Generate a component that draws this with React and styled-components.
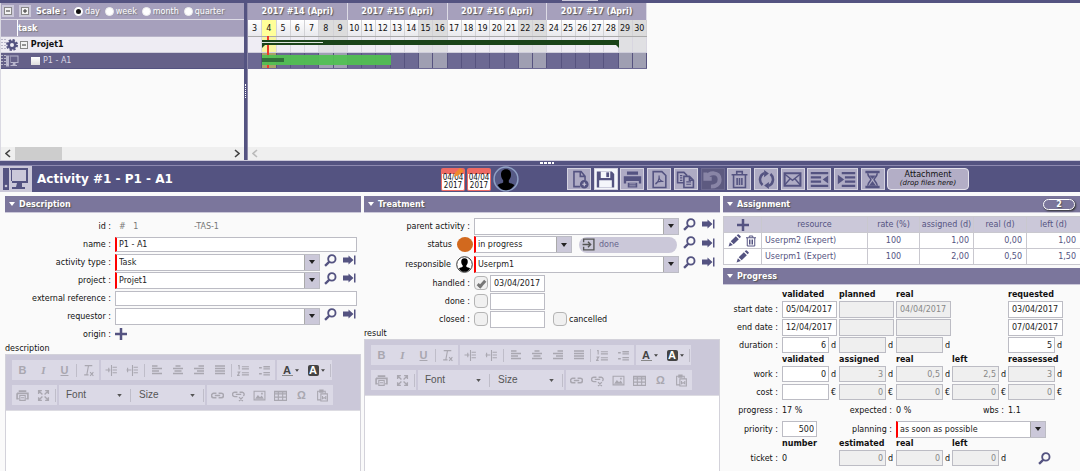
import React from 'react';
import styled, { createGlobalStyle, css } from 'styled-components';

const GlobalStyle = createGlobalStyle`
  *, *::before, *::after { box-sizing: border-box; }
  body {
    margin: 0;
    background: #fafafa;
    color: #111;
    font-family: "DejaVu Sans", Verdana, sans-serif;
    font-size: 8px;
    line-height: 11px;
  }
  button, input, select, textarea {
    margin: 0;
    padding: 0;
    border: 0;
    border-radius: 0;
    background: none;
    color: inherit;
    font: inherit;
  }
  svg { display: block; flex: none; }
`;

const dark = '#545381';
const mid = '#7b769c';
const soft = '#a6a0bc';
const pale = '#cbc8d9';

const Page = styled.div`
  min-height: 100vh;
  display: flex;
  flex-direction: column;
`;

const TopEdge = styled.div`
  height: 3px;
  padding-left: 52%;
  background: ${dark};
  &::before {
    content: '';
    display: block;
    width: 36px;
    height: 1px;
    background: ${pale};
  }
`;

/* ---------- icons ---------- */

const Svg = ({ w = 12, h = w, box = '0 0 24 24', children, ...rest }) => (
  <svg width={w} height={h} viewBox={box} fill="none" stroke="currentColor" strokeWidth="2" aria-hidden="true" {...rest}>
    {children}
  </svg>
);

const SearchIcon = () => (
  <Svg w={13} strokeWidth="3.4">
    <circle cx="14.5" cy="9" r="6.8" />
    <path d="M10 14 L2 22" strokeWidth="4.2" />
  </Svg>
);

const GotoIcon = () => (
  <Svg w={13} h={10} box="0 0 26 20" stroke="none" fill="currentColor">
    <path d="M0 5h11V1l10 9-10 9v-4H0zM22 1h3v18h-3z" />
  </Svg>
);

const PlusIcon = ({ w = 12 }) => (
  <Svg w={w} strokeWidth="5">
    <path d="M12 0v24M0 12h24" />
  </Svg>
);

const PencilIcon = () => (
  <Svg w={13} stroke="none" fill="currentColor">
    <path d="M1 23l2.500-8 5.500 5.500zM5 13.500L14.500 4l5.500 5.500L10.500 19zM16 2.500L18 .800q1-.800 2 0l3.300 3.300q.800 1 0 2L21.500 8z" />
  </Svg>
);

const TrashIcon = ({ w = 12 }) => (
  <Svg w={w}>
    <path d="M2 5.500h20M8.500 5V2h7v3M4.500 6v16h15V6M9 9v10M12 9v10M15 9v10" />
  </Svg>
);

const ScreenIcon = ({ w = 26, h = 24 }) => (
  <Svg w={w} h={h} box="0 0 26 24" stroke="none" fill="currentColor">
    <path d="M0 1h6v22H0z" />
    <circle cx="3" cy="19" r="1.300" fill={pale} />
    <path d="M7 1h18v15h-6v4h3v2H9v-2h4l1-4H9v-2h14V3H7z" fillRule="evenodd" />
    <path d="M8 3h1v11H8z" />
  </Svg>
);

const GearIcon = () => (
  <Svg w={12}>
    <circle cx="12" cy="12" r="6.500" strokeWidth="5" />
    <circle cx="12" cy="12" r="10" strokeWidth="4" strokeDasharray="4.500 3.354" />
  </Svg>
);

const PersonShape = ({ w = 24, ring = '#8fa0c4', bg = '#565a86' }) => (
  <Svg w={w} stroke="none">
    <circle cx="12" cy="12" r="11" fill={bg} stroke={ring} strokeWidth="1.400" />
    <path d="M12 3c3.400 0 4.800 2.400 4.600 5.400-.1 2.300-1 3.700-2 4.800v2c1.500 1 3.700 1 5.200 2.300C18 20.600 15.200 22.400 12 22.400S6 20.600 4.200 17.500c1.500-1.300 3.700-1.300 5.200-2.300v-2c-1-1.100-1.900-2.500-2-4.800C7.200 5.400 8.600 3 12 3z" fill="#000" />
  </Svg>
);

const actionIcons = {
  'New activity': (
    <>
      <path d="M13 21H5V2h9l5 6v5M13 2v6h6" />
      <circle cx="18" cy="18" r="4.500" fill={dark} />
      <path d="M18 15.500v5M15.500 18h5" stroke={pale} strokeWidth="1.500" />
    </>
  ),
  Save: (
    <>
      <path d="M1 2h19l3 3v17H1z" fill={dark} stroke="none" />
      <path d="M6 2h12v8H6zM4 13h16v9H4z" fill="#f4f6fb" stroke="none" />
      <path d="M13 3h3.500v6H13z" fill={dark} stroke="none" />
    </>
  ),
  Print: (
    <>
      <path d="M5 2h14v4H5zM1 8h22v9h-3v-3H4v3H1zM6 16h12v6H6z" fill={dark} stroke="none" />
      <path d="M8 17.500h8M8 20h8" stroke="#b4b1c8" strokeWidth="1" />
    </>
  ),
  'Export to PDF': (
    <>
      <path d="M4 2h11l5 5v15H4z" />
      <path d="M7 18c3-2 5-7 4.500-11M7 18c1-3 5-4 10-3.500M11.500 10c1 3 3 4.500 5.500 4.500" strokeWidth="1.500" />
    </>
  ),
  Copy: (
    <>
      <path d="M9 16H2V3h8l4 4M10 8h7l5 5v9H10zM17 8v5h5" />
      <path d="M5 7h3M5 10h3M5 13h3M13 15h6M13 18h6" strokeWidth="1.500" />
    </>
  ),
  Undo: <path d="M3 3v8h8M4 10C8 2 21 2 21 12c0 6-5 9-11 9" strokeWidth="5" />,
  Delete: <path d="M2 6h20M8.500 5V2h7v3M4.500 7v15h15V7M9 10v9M12 10v9M15 10v9" />,
  Refresh: (
    <>
      <path d="M7 19A9 9 0 0 1 9 4M17 5a9 9 0 0 1-2 15" strokeWidth="3.200" />
      <path d="M9 0l6 4.500L9 9zM15 15v9l-6-4.500z" fill={dark} stroke="none" />
    </>
  ),
  'Send mail': (
    <>
      <path d="M2 4h20v16H2z" strokeWidth="2.600" />
      <path d="M2 5l10 8 10-8M2 19l7-8M22 19l-7-8" strokeWidth="1.800" />
    </>
  ),
  Outdent: (
    <>
      <path d="M1 4h22M1 9.300h13M1 14.600h13M1 20h22" strokeWidth="2.800" />
      <path d="M23 7v10l-7-5z" fill={dark} stroke="none" />
    </>
  ),
  Indent: (
    <>
      <path d="M6 4h17M10 9.300h13M10 14.600h13M6 20h17" strokeWidth="2.800" />
      <path d="M1 6v12l8-6z" fill={dark} stroke="none" />
    </>
  ),
  History: (
    <>
      <path d="M3 2.500h18M3 21.500h18" strokeWidth="3" />
      <path d="M6 4c0 4 4 6 4 8s-4 4-4 8M18 4c0 4-4 6-4 8s4 4 4 8" />
      <path d="M8 7h8l-4 4.500zM12 14l4.500 6h-9z" fill={dark} stroke="none" />
    </>
  ),
};

/* ---------- planning (gantt) pane ---------- */

const Planning = styled.div`
  display: grid;
  grid-template-columns: 244px 4px 1fr;
`;

const Divider = styled.div`
  display: flex;
  align-items: center;
  justify-content: center;
  background: ${dark};
  border-right: 1px solid #8d89a8;
  &::after {
    content: '';
    height: 14px;
    border-left: 1px dotted #fff;
    margin-top: 18px;
  }
`;

const TaskList = styled.div`
  display: flex;
  flex-direction: column;
  border-left: 1px solid #dad9e2;
`;

const ScaleBar = styled.div`
  height: 17px;
  display: flex;
  align-items: center;
  padding-left: 1px;
  background: ${soft};
  border-bottom: 1px solid #dddbe6;
  color: #fff;
`;

const ExpandButton = styled.button`
  width: 12px;
  height: 12px;
  margin-right: 5px;
  display: grid;
  place-items: center;
  background: ${pale};
`;

const SignBox = styled.span`
  width: 8px;
  height: 8px;
  border: 1px solid #888;
  background: #f3f3f3;
  color: #333;
  display: grid;
  place-items: center;
  flex: none;
`;

const ScaleTitle = styled.strong`
  margin-right: 8px;
  text-shadow: 1px 1px 1px #555;
`;

const ScaleOption = styled.label`
  display: flex;
  align-items: center;
  gap: 2px;
  margin-right: 5px;
  text-shadow: 1px 1px 1px #777;
  input {
    appearance: none;
    width: 9px;
    height: 9px;
    border-radius: 50%;
    background: #fff;
    border: 1px solid #eee;
  }
  input:checked {
    background: #111;
    border: 2px solid #fff;
  }
`;

const TaskHead = styled.div`
  height: 17px;
  display: flex;
  align-items: center;
  background: ${soft};
  border-bottom: 1px solid #b9b5c9;
  color: #fff;
  font-weight: bold;
  text-shadow: 1px 1px 1px #777;
  &::before {
    content: '';
    width: 17px;
    height: 16px;
    border-right: 1px solid #fff;
  }
`;

const TaskRow = styled.div`
  height: 16px;
  display: flex;
  align-items: center;
  color: ${(p) => (p.$selected ? '#d9d7e6' : '#111')};
  background: ${(p) => (p.$selected ? '#656189' : '#eeecf3')};
  border-bottom: 1px solid ${(p) => (p.$selected ? dark : '#cfcedb')};
  font-weight: ${(p) => (p.$selected ? 'normal' : 'bold')};
`;

const Grip = styled.span`
  width: 6px;
  height: 12px;
  margin-right: -1px;
  background: repeating-linear-gradient(transparent 0 1px, ${(p) => p.$gap} 1px 3px),
    repeating-linear-gradient(90deg, #b9b7c9 0 2px, transparent 2px 3px);
`;

const RowIcon = styled.span`
  width: 14px;
  color: ${(p) => (p.$light ? '#b7b5cc' : dark)};
`;

const Bullet = styled.span`
  width: 9px;
  height: 8px;
  margin: 0 3px 0 11px;
  background: linear-gradient(#fff, #ddd);
`;

const PaneBody = styled.div`
  height: 78px;
  background: #fafafa;
`;

const ScrollTrack = styled.div`
  height: 13px;
  display: flex;
  align-items: center;
  padding: 0 4px;
  gap: 4px;
  background: #efefef;
  color: ${(p) => (p.$idle ? '#bbb' : '#444')};
`;

const ScrollThumb = styled.div`
  width: 47px;
  height: 13px;
  margin-right: auto;
  background: #cdcdcd;
`;

const Chart = styled.div`
  position: relative;
  width: 399px;
`;

const WeekRow = styled.div`
  height: 17px;
  display: grid;
  grid-template-columns: repeat(4, 1fr);
  background: ${soft};
`;

const Week = styled.div`
  display: grid;
  place-items: center;
  border-right: 1px solid #dddbe6;
  color: #fff;
  font-weight: bold;
  text-shadow: 1px 1px 1px #555;
`;

const DayRow = styled.div`
  height: ${(p) => p.$height}px;
  display: grid;
  grid-template-columns: repeat(28, 1fr);
  background: ${(p) => p.$bg};
  border-bottom: 1px solid ${(p) => p.$line};
`;

const Day = styled.div`
  display: grid;
  place-items: center;
  overflow: hidden;
  border-right: 1px solid ${(p) => p.$line};
  ${(p) => p.$weekend && css`background: ${p.$shade};`}
  ${(p) => p.$today && css`background: ${p.$todayShade};`}
`;

const Overlay = styled.div`
  position: absolute;
  left: 0;
  right: 0;
  top: 34px;
  height: 32px;
`;

const TodayLine = styled.div`
  position: absolute;
  left: 19px;
  top: -1px;
  width: 2px;
  height: 32px;
  background: #ee3a2c;
`;

const SummaryBar = styled.div`
  position: absolute;
  top: 3px;
  height: 5px;
  background: #1a4319;
  &::before, &::after {
    content: '';
    position: absolute;
    top: 5px;
    border-top: 3px solid #1a4319;
  }
  &::before { left: 0; border-right: 3px solid transparent; }
  &::after { right: 0; border-left: 3px solid transparent; }
`;

const SummaryProgress = styled.div`
  position: relative;
  top: 2px;
  height: 1px;
  background: #dfe6df;
`;

const TaskBar = styled.div`
  position: absolute;
  top: 18px;
  height: 10px;
  padding: 3px 0;
  background: rgba(81, 193, 82, .93);
`;

const TaskProgress = styled.div`
  height: 4px;
  background: #32703b;
`;

const HorizontalSplit = styled.div`
  height: 6px;
  display: flex;
  justify-content: center;
  padding-left: 14px;
  background: ${dark};
  border-top: 1px solid ${pale};
  border-bottom: 1px solid #8d89b0;
  &::before {
    content: '';
    width: 14px;
    height: 2px;
    margin-top: 1px;
    background: repeating-linear-gradient(90deg, #fff 0 3px, ${dark} 3px 4px);
  }
`;

/* ---------- activity header ---------- */

const ActivityHeader = styled.header`
  height: 26px;
  display: grid;
  grid-template-columns: 441fr 126fr 513fr;
  align-items: center;
  background: ${dark};
`;

const TitleArea = styled.div`
  display: flex;
  align-items: center;
  gap: 5px;
  color: #fff;
`;

const ActivityIcon = styled.div`
  width: 32px;
  height: 26px;
  display: grid;
  place-items: center;
  background: ${pale};
  color: ${dark};
`;

const Title = styled.h1`
  margin: 0;
  font-size: 12px;
  line-height: 16px;
`;

const Badges = styled.div`
  display: flex;
  align-items: center;
  gap: 2px;
`;

const Calendar = styled.time`
  position: relative;
  width: 24px;
  height: 23px;
  border: 1px solid #ee6a63;
  border-top-width: 6px;
  border-radius: 2px;
  background: #fff;
  color: #111;
  font: 8px/8px "DejaVu Sans Condensed", Verdana, sans-serif;
  text-align: center;
  svg {
    position: absolute;
    right: 0;
    top: -6px;
  }
`;

const Actions = styled.div`
  display: flex;
  align-items: center;
  gap: 2px;
`;

const ActionList = styled.div`
  flex: 0 0 318px;
  display: flex;
  justify-content: space-between;
`;

const ActionButton = styled.button`
  width: 24px;
  height: 22px;
  display: grid;
  place-items: center;
  color: ${dark};
  background: ${(p) => (p.$active ? '#f4f6fb' : '#aeabc4')};
  border: 1px solid #d5d3e1;
  &:disabled {
    color: #8985a6;
    background: #5d5a80;
    border-color: #6d6a90;
  }
`;

const DropZone = styled.button`
  width: 82px;
  height: 22px;
  border: 1px solid #e4e2ec;
  border-radius: 4px;
  background: #b3aec6;
  color: #111;
  line-height: 8px;
  em { display: block; font-size: 7px; }
`;

/* ---------- detail form ---------- */

const Columns = styled.main`
  flex: 1;
  display: grid;
  grid-template-columns: 356fr 356fr 357fr;
  gap: 3px;
  padding: 4px 0 0 5px;
`;

const Column = styled.section`
  min-width: 0;
  display: flex;
  flex-direction: column;
`;

const SectionHead = styled.h2`
  height: 17px;
  flex: none;
  margin: 0;
  padding: 0 5px 0 4px;
  display: flex;
  align-items: center;
  gap: 4px;
  background: ${mid};
  border-bottom: 1px solid ${pale};
  color: #fff;
  font-size: 8px;
  text-shadow: 1px 1px 1px #555;
`;

const CountPill = styled.span`
  width: 32px;
  height: 11px;
  margin-left: auto;
  border: 1px solid #fff;
  border-radius: 6px;
  box-shadow: 1px 1px 2px #333;
  background: ${mid};
  line-height: 10px;
  text-align: center;
`;

const Form = styled.div`
  padding-top: ${(p) => p.$top || 4}px;
`;

const Line = styled.div`
  height: ${(p) => p.$height || 18}px;
  display: flex;
  align-items: center;
`;

const Label = styled.label`
  flex: 0 0 110px;
  display: flex;
  align-items: center;
  justify-content: flex-end;
  gap: 5px;
  padding-right: ${(p) => (p.$tight ? 1 : 4)}px;
`;

const boxed = css`
  min-width: 0;
  border: 1px solid #bcbcc4;
  background: #fff;
  color: #222;
`;

const TextBox = styled.input`
  ${boxed}
  flex: 1;
  height: 15px;
  margin-right: 4px;
  padding: 0 2px;
  border-left: ${(p) => (p.required ? '2px solid #f00' : '1px solid #bcbcc4')};
`;

const SelectShell = styled.span`
  ${boxed}
  position: relative;
  flex: 1;
  height: 17px;
  display: flex;
  border-left: ${(p) => (p.$required ? '2px solid #f00' : '1px solid #bcbcc4')};
  select {
    appearance: none;
    width: 100%;
    padding: 0 18px 0 2px;
  }
`;

const SelectArrow = styled.span`
  position: absolute;
  top: 0;
  right: 0;
  width: 15px;
  height: 15px;
  display: grid;
  place-items: center;
  background: ${pale};
  border-left: 1px solid #aaa;
  pointer-events: none;
`;

const Links = styled.span`
  flex: 0 0 41px;
  display: flex;
  align-items: center;
  gap: 6px;
  padding: 0 0 4px 4px;
`;

const IconButton = styled.button`
  display: block;
  color: ${dark};
`;

const IconLink = styled.a`
  color: ${dark};
`;

const Muted = styled.span`
  width: 75px;
  padding-left: 4px;
  color: #777;
`;

const StatusDot = styled.i`
  width: 16px;
  height: 15px;
  border-radius: 50%;
  background: #d2691e;
`;

const NextStatus = styled.button`
  flex: 1;
  height: 16px;
  margin: 0 2px 0 7px;
  padding-left: 3px;
  display: flex;
  align-items: center;
  gap: 4px;
  border-radius: 8px;
  background: ${pale};
  color: #67648c;
`;

const CheckBox = styled.input`
  appearance: none;
  width: 14px;
  height: 14px;
  display: grid;
  place-items: center;
  border: 1px solid #b4b4b4;
  border-radius: 4px;
  background: #f0f0f0;
  &:checked::after {
    content: '';
    width: 5px;
    height: 9px;
    border: solid #777;
    border-width: 0 3px 3px 0;
    transform: rotate(42deg);
  }
`;

const DateBox = styled.input`
  ${boxed}
  width: 55px;
  height: 17px;
  padding-left: 3px;
  &:disabled {
    background: #efefef;
    color: #888;
  }
`;

const HandledDate = styled(DateBox)`
  margin-left: 2px;
`;

const InlineCheck = styled.label`
  display: flex;
  align-items: center;
  gap: 2px;
  margin-left: 8px;
`;

/* ---------- rich text editor ---------- */

const EditorTitle = styled.label`
  height: 11px;
  flex: none;
`;

const EditorFrame = styled.div`
  flex: 1;
  display: flex;
  flex-direction: column;
  border: 1px solid #d3d2da;
  border-bottom: 0;
  textarea {
    flex: 1;
    min-height: 60px;
    width: 100%;
    resize: none;
    background: #fff;
  }
`;

const Tools = styled.div`
  padding: 5px 6px 5px;
  display: grid;
  gap: 5px;
  background: ${pale};
  border-bottom: 1px solid #dddce2;
`;

const ToolRow = styled.div`
  display: flex;
  gap: 2px;
`;

const ToolGroup = styled.div`
  height: 20px;
  display: flex;
  align-items: center;
  background: #dbd9e6;
  color: #a9a7b0;
`;

const Tool = styled.button`
  width: ${(p) => (p.$wide ? 26 : 21)}px;
  height: 20px;
  display: flex;
  align-items: center;
  justify-content: center;
  gap: 2px;
  color: ${(p) => (p.$wide ? '#444' : 'inherit')};
  font: ${(p) => (p.$italic ? 'italic' : 'normal')} bold 11px/12px
    ${(p) => (p.$italic ? '"Liberation Serif", serif' : '"Liberation Sans", Arial, sans-serif')};
  text-decoration: ${(p) => (p.$underline ? 'underline' : 'none')};
`;

const ToolDivider = styled.i`
  width: 1px;
  height: 13px;
  margin: 0 1px;
  background: #bfbdc9;
`;

const Combo = styled.span`
  position: relative;
  width: 70px;
  color: #555;
  font: 10px/12px "Liberation Sans", Arial, sans-serif;
  select {
    appearance: none;
    width: 100%;
    padding-left: 7px;
  }
  svg {
    position: absolute;
    right: 7px;
    top: 5px;
    pointer-events: none;
  }
`;

const LetterMark = styled.span`
  width: 11px;
  height: 11px;
  color: ${(p) => (p.$filled ? '#fff' : '#444')};
  background: ${(p) => (p.$filled ? '#444' : 'none')};
  border-bottom: ${(p) => (p.$filled ? 0 : '1px solid #888')};
  border-radius: ${(p) => (p.$filled ? 2 : 0)}px;
  line-height: 11px;
`;

/* ---------- assignment + progress ---------- */

const AssignTable = styled.table`
  width: 100%;
  margin: 3px 0;
  table-layout: fixed;
  border-collapse: collapse;
  color: ${dark};
  th, td {
    height: 16px;
    padding: 0 4px;
    border: 1px solid #c9c8cf;
    text-align: right;
    white-space: nowrap;
  }
  th {
    padding: 0;
    background: ${pale};
    font-weight: normal;
    text-align: center;
  }
  td { background: #fff; }
  td:nth-child(1), td:nth-child(3) { text-align: center; }
  td:nth-child(2) { padding-left: 3px; text-align: left; }
  th:nth-child(4), td:nth-child(4) { border-left-color: #999; }
`;

const CellTools = styled.span`
  display: flex;
  justify-content: center;
  gap: 4px;
`;

const ProgressLine = styled.div`
  height: ${(p) => p.$height || 18}px;
  display: grid;
  grid-template-columns: 56px 57px 57px 56px 56px 1fr;
  padding-left: 3px;
  align-items: center;
  > :first-child {
    padding-right: 4px;
    text-align: right;
    white-space: nowrap;
  }
`;

const HeadCell = styled.strong`
  grid-column: ${(p) => p.$col};
  white-space: nowrap;
`;

const Amount = styled.span`
  grid-column: ${(p) => p.$col};
  display: flex;
  align-items: center;
  gap: 2px;
`;

const NumberBox = styled.input`
  ${boxed}
  width: ${(p) => (p.$short ? 35 : 47)}px;
  height: 16px;
  padding-right: 2px;
  text-align: right;
  &:disabled {
    background: #efefef;
    color: #888;
  }
`;

const PlainCell = styled.span`
  grid-column: ${(p) => p.$col};
  text-align: ${(p) => p.$align || 'left'};
  padding-right: ${(p) => (p.$align ? 4 : 0)}px;
  white-space: nowrap;
`;

const PlanningSelect = styled.span`
  grid-column: 4 / 7;
  display: flex;
  width: 150px;
`;

const TicketSearch = styled(IconButton)`
  justify-self: center;
`;

const Triangle = ({ w = 6, color = 'currentColor' }) => (
  <svg width={w} height={w === 6 ? 4 : 3} viewBox="0 0 6 4" aria-hidden="true">
    <path d="M0 0h6L3 4z" fill={color} />
  </svg>
);

const Chevron = ({ flip }) => (
  <Svg w={6} h={9} box="0 0 6 9" strokeWidth="1.600">
    <path d={flip ? 'M1 1l4 3.500L1 8' : 'M5 1L1 4.500 5 8'} />
  </Svg>
);

const Sign = ({ plus }) => (
  <SignBox>
    <Svg w={4} box="0 0 4 4" strokeWidth="1">
      <path d={plus ? 'M0 2h4M2 0v4' : 'M0 2h4'} />
    </Svg>
  </SignBox>
);

const SelectField = ({ id, value, required, label }) => (
  <SelectShell $required={required}>
    <select id={id} aria-label={label} defaultValue={value}>
      <option value={value}>{value}</option>
    </select>
    <SelectArrow><Triangle /></SelectArrow>
  </SelectShell>
);

const FieldLinks = ({ name }) => (
  <Links>
    <IconButton type="button" aria-label={`search ${name}`}><SearchIcon /></IconButton>
    <IconLink href="#" aria-label={`go to ${name}`}><GotoIcon /></IconLink>
  </Links>
);

const Section = ({ title, count }) => (
  <SectionHead>
    <Triangle w={6} />
    {title}
    {count && <CountPill>{count}</CountPill>}
  </SectionHead>
);

const days = Array.from({ length: 28 }, (_, i) => i + 3);
const dayFlags = (d) => ({ $weekend: [1, 2].includes(d % 7), $today: d === 4 });
const percent = (n) => `${(n / 28) * 100}%`;

const PlanningPane = () => (
  <Planning>
    <TaskList>
      <ScaleBar>
        <ExpandButton type="button" aria-label="collapse all"><Sign /></ExpandButton>
        <ExpandButton type="button" aria-label="expand all"><Sign plus /></ExpandButton>
        <ScaleTitle>Scale :</ScaleTitle>
        {['day', 'week', 'month', 'quarter'].map((s) => (
          <ScaleOption key={s}>
            <input type="radio" name="scale" defaultChecked={s === 'day'} />
            {s}
          </ScaleOption>
        ))}
      </ScaleBar>
      <TaskHead>task</TaskHead>
      <TaskRow>
        <Grip $gap="#eeecf3" />
        <RowIcon><GearIcon /></RowIcon>
        <Sign />
        &nbsp;Projet1
      </TaskRow>
      <TaskRow $selected>
        <Grip $gap="#656189" />
        <RowIcon $light><ScreenIcon w={13} h={12} /></RowIcon>
        <Bullet />
        P1 - A1
      </TaskRow>
      <PaneBody />
      <ScrollTrack>
        <Chevron />
        <ScrollThumb />
        <Chevron flip />
      </ScrollTrack>
    </TaskList>
    <Divider />
    <div>
      <Chart>
        <WeekRow>
          {[14, 15, 16, 17].map((w) => <Week key={w}>{`2017 #${w} (Apri)`}</Week>)}
        </WeekRow>
        <DayRow $height={17} $bg="linear-gradient(#fff, #e9e9ed)" $line="#aaa">
          {days.map((d) => (
            <Day key={d} {...dayFlags(d)} $line="#d2d2d6" $shade="#dcdcdc" $todayShade="#ffff99">{d}</Day>
          ))}
        </DayRow>
        <DayRow $height={16} $bg="#efedf4" $line="#cfcedb">
          {days.map((d) => (
            <Day key={d} {...dayFlags(d)} $line="#d8d6e0" $shade="#e0e0e3" $todayShade="#f7f5a0" />
          ))}
        </DayRow>
        <DayRow $height={16} $bg="#6c6993" $line="#6c6993">
          {days.map((d) => (
            <Day key={d} {...dayFlags(d)} $line="#56537f" $shade="#9f9fb2" $todayShade="#a9a169" />
          ))}
        </DayRow>
        <Overlay>
          <TodayLine />
          <SummaryBar style={{ left: percent(1), width: percent(25) }}>
            <SummaryProgress style={{ width: '17%' }} />
          </SummaryBar>
          <TaskBar style={{ left: percent(1), width: percent(9) }}>
            <TaskProgress style={{ width: '17%' }} />
          </TaskBar>
        </Overlay>
      </Chart>
      <PaneBody />
      <ScrollTrack $idle><Chevron /></ScrollTrack>
    </div>
  </Planning>
);

const Header = () => (
  <ActivityHeader>
    <TitleArea>
      <ActivityIcon><ScreenIcon /></ActivityIcon>
      <Title>Activity #1 - P1 - A1</Title>
    </TitleArea>
    <Badges>
      <Calendar>
        04/04 2017
        <svg width="10" height="9" viewBox="0 0 10 9" aria-hidden="true">
          <path d="M0 9l1-4 5-5 4 3-5 4z" fill="#ef8a2f" />
        </svg>
      </Calendar>
      <Calendar>04/04 2017</Calendar>
      <PersonShape w={26} />
    </Badges>
    <Actions>
      <ActionList>
        {Object.entries(actionIcons).map(([name, drawing]) => (
          <ActionButton key={name} type="button" aria-label={name} $active={name === 'Save'} disabled={name === 'Undo'}>
            <Svg w={19}>{drawing}</Svg>
          </ActionButton>
        ))}
      </ActionList>
      <DropZone type="button">Attachment<em>(drop files here)</em></DropZone>
    </Actions>
  </ActivityHeader>
);

const toolIcons = {
  clear: <path d="M5 3h14M12 3L9 19M4 20h8M15 15l6 7M21 15l-6 7" />,
  outdent: <path d="M12 2v20M14 6h8M14 11h8M14 16h8M1 11h9M7 7v8" />,
  indent: <path d="M12 2v20M14 6h8M14 11h8M14 16h8M1 11h9M3 7v8" />,
  left: <path d="M2 4h11M2 9h20M2 14h14M2 19h20" strokeWidth="3" />,
  center: <path d="M7 4h10M2 9h20M5 14h14M2 19h20" strokeWidth="3" />,
  right: <path d="M11 4h11M2 9h20M8 14h14M2 19h20" strokeWidth="3" />,
  justify: <path d="M2 4h20M2 9h20M2 14h20M2 19h20" strokeWidth="3" />,
  numbered: <path d="M9 5h13M9 9h13M9 16h13M9 20h13M2 3h2v7M1 15h4l-4 6h4" />,
  bullets: <path d="M10 5h12M10 9h12M10 16h12M10 20h12M2 7h5M2 18h5" strokeWidth="2.500" />,
  print: (
    <>
      <path d="M5 4h14M2 8h20v10h-3M5 18H2V8" strokeWidth="3" />
      <path d="M7 12h10v9H7zM9 16h6" />
    </>
  ),
  maximize: <path d="M3 9V3h6M15 3h6v6M21 15v6h-6M9 21H3v-6M4 4l6 6M20 4l-6 6M20 20l-6-6M4 20l6-6" strokeWidth="2.500" />,
  link: <path d="M10 8H5a4 4 0 0 0 0 8h5M14 8h5a4 4 0 0 1 0 8h-5M7 12h10" strokeWidth="2.800" />,
  unlink: <path d="M10 6H5a4 4 0 0 0 0 8h5M14 6h5a4 4 0 0 1 2 7M7 10h10M13 15l7 7M20 15l-7 7" strokeWidth="2.500" />,
  image: (
    <>
      <path d="M2 4h20v16H2z" />
      <path d="M4 18l5-7 4 4 3-3 4 6zM15 7h3v3h-3z" fill="currentColor" stroke="none" />
    </>
  ),
  table: <path d="M1 4h22v17H1zM1 9h22M1 15h22M8 5v16M16 5v16M1 5.500h22" />,
  paste: <path d="M9 20H3V4h14v5M7 2h6v4H7zM9 9h12v13H9zM12 13v5l3-2 3 2v-5" />,
};

const IconTool = ({ name, w = 13 }) => (
  <Tool type="button" aria-label={name}><Svg w={w}>{toolIcons[name]}</Svg></Tool>
);

const ComboBox = ({ name }) => (
  <Combo>
    <select aria-label={name}><option>{name}</option></select>
    <Triangle w={5} />
  </Combo>
);

const Editor = ({ id, title }) => (
  <>
    <EditorTitle htmlFor={id}>{title}</EditorTitle>
    <EditorFrame>
      <Tools>
        <ToolRow>
          <ToolGroup>
            <Tool type="button">B</Tool>
            <Tool type="button" $italic>I</Tool>
            <Tool type="button" $underline>U</Tool>
            <ToolDivider />
            <IconTool name="clear" />
          </ToolGroup>
          <ToolGroup>
            <IconTool name="outdent" />
            <IconTool name="indent" />
            <ToolDivider />
            {['left', 'center', 'right', 'justify'].map((n) => <IconTool key={n} name={n} w={12} />)}
            <ToolDivider />
            <IconTool name="numbered" />
            <IconTool name="bullets" />
          </ToolGroup>
          <ToolGroup>
            <Tool type="button" $wide><LetterMark>A</LetterMark><Triangle w={4} /></Tool>
            <Tool type="button" $wide><LetterMark $filled>A</LetterMark><Triangle w={4} /></Tool>
            <ToolDivider />
          </ToolGroup>
        </ToolRow>
        <ToolRow>
          <ToolGroup>
            <IconTool name="print" />
            <IconTool name="maximize" />
            <ToolDivider />
          </ToolGroup>
          <ToolGroup>
            <ComboBox name="Font" />
            <ToolDivider />
            <ComboBox name="Size" />
            <ToolDivider />
          </ToolGroup>
          <ToolGroup>
            {['link', 'unlink', 'image', 'table'].map((n) => <IconTool key={n} name={n} />)}
            <Tool type="button">Ω</Tool>
            <IconTool name="paste" />
          </ToolGroup>
        </ToolRow>
      </Tools>
      <textarea id={id} />
    </EditorFrame>
  </>
);

const Description = () => (
  <Column>
    <Section title="Description" />
    <Form>
      <Line>
        <Label as="span">id :</Label>
        <Muted>#&nbsp;&nbsp; 1</Muted>
        <Muted>-TAS-1</Muted>
      </Line>
      <Line>
        <Label htmlFor="name">name :</Label>
        <TextBox id="name" defaultValue="P1 - A1" required />
      </Line>
      <Line>
        <Label htmlFor="type">activity type :</Label>
        <SelectField id="type" value="Task" required />
        <FieldLinks name="activity type" />
      </Line>
      <Line>
        <Label htmlFor="project">project :</Label>
        <SelectField id="project" value="Projet1" required />
        <FieldLinks name="project" />
      </Line>
      <Line>
        <Label htmlFor="reference">external reference :</Label>
        <TextBox id="reference" />
      </Line>
      <Line>
        <Label htmlFor="requestor">requestor :</Label>
        <SelectField id="requestor" value="" />
        <FieldLinks name="requestor" />
      </Line>
      <Line>
        <Label as="span">origin :</Label>
        <IconButton type="button" aria-label="add origin"><PlusIcon /></IconButton>
      </Line>
    </Form>
    <Editor id="description" title="description" />
  </Column>
);

const Treatment = () => (
  <Column>
    <Section title="Treatment" />
    <Form>
      <Line>
        <Label htmlFor="parent">parent activity :</Label>
        <SelectField id="parent" value="" />
        <FieldLinks name="parent activity" />
      </Line>
      <Line $height={19}>
        <Label htmlFor="status" $tight>status <StatusDot /></Label>
        <SelectField id="status" value="in progress" required />
        <NextStatus type="button">
          <Svg w={13} strokeWidth="2.500" color="#555">
            <path d="M3 8V2h19v20H3v-6M1 12h14M11 7l5 5-5 5" />
          </Svg>
          done
        </NextStatus>
        <FieldLinks name="status" />
      </Line>
      <Line $height={20}>
        <Label htmlFor="responsible" $tight>responsible <PersonShape w={17} ring="#333" bg="#fff" /></Label>
        <SelectField id="responsible" value="Userpm1" required />
        <FieldLinks name="responsible" />
      </Line>
      <Line>
        <Label htmlFor="handled">handled :</Label>
        <CheckBox id="handled" type="checkbox" defaultChecked />
        <HandledDate aria-label="handled date" defaultValue="03/04/2017" />
      </Line>
      <Line>
        <Label htmlFor="done">done :</Label>
        <CheckBox id="done" type="checkbox" />
        <HandledDate aria-label="done date" />
      </Line>
      <Line>
        <Label htmlFor="closed">closed :</Label>
        <CheckBox id="closed" type="checkbox" />
        <HandledDate aria-label="closed date" />
        <InlineCheck><CheckBox type="checkbox" />cancelled</InlineCheck>
      </Line>
    </Form>
    <Editor id="result" title="result" />
  </Column>
);

const NumberCell = ({ col, label, value = '', unit = 'd', locked }) => (
  <Amount $col={col}>
    <NumberBox aria-label={label} defaultValue={value} disabled={locked} />
    {unit}
  </Amount>
);

const Progress = () => (
  <Form>
    <ProgressLine $height={11}>
      <span />
      <HeadCell>validated</HeadCell>
      <HeadCell>planned</HeadCell>
      <HeadCell>real</HeadCell>
      <HeadCell $col={6}>requested</HeadCell>
    </ProgressLine>
    <ProgressLine>
      <label htmlFor="start">start date :</label>
      <DateBox id="start" defaultValue="05/04/2017" />
      <DateBox aria-label="planned start" disabled />
      <DateBox aria-label="real start" defaultValue="04/04/2017" disabled />
      <span />
      <DateBox aria-label="requested start" defaultValue="03/04/2017" />
    </ProgressLine>
    <ProgressLine>
      <label htmlFor="end">end date :</label>
      <DateBox id="end" defaultValue="12/04/2017" />
      <DateBox aria-label="planned end" disabled />
      <DateBox aria-label="real end" disabled />
      <span />
      <DateBox aria-label="requested end" defaultValue="07/04/2017" />
    </ProgressLine>
    <ProgressLine>
      <span>duration :</span>
      <NumberCell col={2} label="validated duration" value="6" />
      <NumberCell col={3} label="planned duration" locked />
      <NumberCell col={4} label="real duration" locked />
      <NumberCell col={6} label="requested duration" value="5" />
    </ProgressLine>
    <ProgressLine $height={11}>
      <span />
      <HeadCell>validated</HeadCell>
      <HeadCell>assigned</HeadCell>
      <HeadCell>real</HeadCell>
      <HeadCell>left</HeadCell>
      <HeadCell>reassessed</HeadCell>
    </ProgressLine>
    {[
      ['work', 'd', '0', '3', '0,5', '2,5', '3'],
      ['cost', '€', '', '0', '0', '0', '0'],
    ].map(([name, unit, ...values]) => (
      <ProgressLine key={name}>
        <span>{name} :</span>
        {values.map((v, i) => (
          <NumberCell key={i} col={i + 2} label={`${name} ${i + 1}`} value={v} unit={unit} locked={i > 0} />
        ))}
      </ProgressLine>
    ))}
    <ProgressLine $height={19}>
      <span>progress :</span>
      <PlainCell $col={2}>17 %</PlainCell>
      <PlainCell $col={3} $align="right">expected :</PlainCell>
      <PlainCell $col={4}>0 %</PlainCell>
      <PlainCell $col={5} $align="right">wbs :</PlainCell>
      <PlainCell $col={6}>1.1</PlainCell>
    </ProgressLine>
    <ProgressLine>
      <label htmlFor="priority">priority :</label>
      <NumberBox id="priority" defaultValue="500" $short />
      <PlainCell as="label" htmlFor="planning" $col={3} $align="right">planning :</PlainCell>
      <PlanningSelect>
        <SelectField id="planning" value="as soon as possible" required />
      </PlanningSelect>
    </ProgressLine>
    <ProgressLine $height={11}>
      <span />
      <HeadCell>number</HeadCell>
      <HeadCell>estimated</HeadCell>
      <HeadCell>real</HeadCell>
      <HeadCell>left</HeadCell>
    </ProgressLine>
    <ProgressLine>
      <span>ticket :</span>
      <PlainCell $col={2}>0</PlainCell>
      <NumberCell col={3} label="ticket estimated" value="0" locked />
      <NumberCell col={4} label="ticket real" value="0" locked />
      <NumberCell col={5} label="ticket left" value="0" locked />
      <TicketSearch type="button" aria-label="search tickets"><SearchIcon /></TicketSearch>
    </ProgressLine>
  </Form>
);

const resources = [
  { name: 'Userpm2 (Expert)', assigned: '1,00', real: '0,00', left: '1,00', removable: true },
  { name: 'Userpm1 (Expert)', assigned: '2,00', real: '0,50', left: '1,50' },
];

const Assignment = () => (
  <AssignTable>
    <colgroup>
      {[38, 106, 52, 54, 53, 54].map((w, i) => <col key={i} width={w} />)}
    </colgroup>
    <thead>
      <tr>
        <th>
          <CellTools>
            <IconButton type="button" aria-label="add resource"><PlusIcon /></IconButton>
          </CellTools>
        </th>
        <th>resource</th>
        <th>rate (%)</th>
        <th>assigned (d)</th>
        <th>real (d)</th>
        <th>left (d)</th>
      </tr>
    </thead>
    <tbody>
      {resources.map((r) => (
        <tr key={r.name}>
          <td>
            <CellTools>
              <IconButton type="button" aria-label={`edit ${r.name}`}><PencilIcon /></IconButton>
              {r.removable && (
                <IconButton type="button" aria-label={`remove ${r.name}`}><TrashIcon /></IconButton>
              )}
            </CellTools>
          </td>
          <td>{r.name}</td>
          <td>100</td>
          <td>{r.assigned}</td>
          <td>{r.real}</td>
          <td>{r.left}</td>
        </tr>
      ))}
    </tbody>
  </AssignTable>
);

const App = () => (
  <Page>
    <GlobalStyle />
    <TopEdge />
    <PlanningPane />
    <HorizontalSplit />
    <Header />
    <Columns>
      <Description />
      <Treatment />
      <Column>
        <Section title="Assignment" count="2" />
        <Assignment />
        <Section title="Progress" />
        <Progress />
      </Column>
    </Columns>
  </Page>
);

export default App;
